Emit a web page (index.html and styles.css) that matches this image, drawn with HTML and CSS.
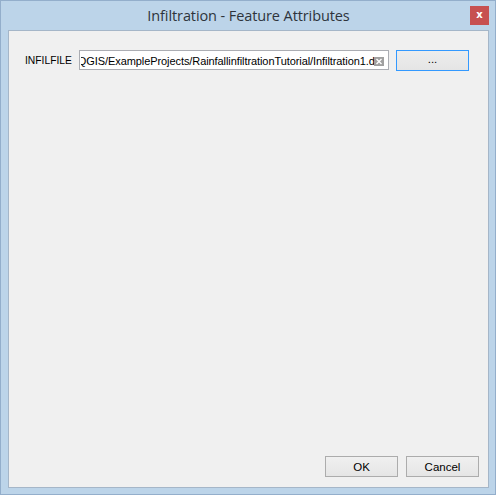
FILE: index.html
```html
<!DOCTYPE html>
<html>
<head>
<meta charset="utf-8">
<link rel="stylesheet" href="styles.css">
</head>
<body>
<div class="window">
  <div class="titlebar">
    <span></span>
    <span class="title">Infiltration - Feature Attributes</span>
    <span class="close">x</span>
  </div>
  <div class="client">
    <div class="row">
      <label class="label">INFILFILE</label>
      <div class="input">
        <div class="viewport"><span class="value">C:/QGIS/ExampleProjects/RainfallinfiltrationTutorial/Infiltration1.dat</span></div>
        <span class="clear"><svg width="10" height="9" viewBox="0 0 10 9"><path d="M2.5 2 L7.5 7 M7.5 2 L2.5 7" stroke="#fff" stroke-width="1.4"/></svg></span>
      </div>
      <button class="btn btn-default">...</button>
    </div>
    <div class="spacer"></div>
    <div class="actions">
      <button class="btn btn-action">OK</button>
      <button class="btn btn-action">Cancel</button>
    </div>
  </div>
</div>
</body>
</html>
```
FILE: styles.css
```css
html, body {
  margin: 0;
  padding: 0;
  background: #bcd4e9;
}
.window {
  width: 496px;
  height: 495px;
  box-sizing: border-box;
  border: 1px solid #93aecb;
  background: #bcd4e9;
  padding: 0 6px 6px 7px;
  display: flex;
  flex-direction: column;
  font-family: "Liberation Sans", Arial, sans-serif;
}
.titlebar {
  height: 29px;
  flex: 0 0 29px;
  display: grid;
  grid-template-columns: 1fr auto 1fr;
  align-items: start;
}
.title {
  font-family: "Open Sans", "Noto Sans", sans-serif;
  font-size: 14.5px;
  color: #2e343c;
  padding-top: 5px;
  line-height: 20px;
  letter-spacing: -0.1px;
}
.close {
  justify-self: end;
  margin-top: 5px;
  width: 19px;
  height: 19px;
  background: #c75050;
  color: #fff;
  font-family: "DejaVu Sans", sans-serif;
  font-weight: bold;
  font-size: 10px;
  line-height: 18px;
  text-align: center;
}
.client {
  flex: 1;
  background: #f0f0f0;
  border: 1px solid #a5b6c8;
  display: flex;
  flex-direction: column;
}
.row {
  display: flex;
  align-items: flex-start;
  padding: 19px 19px 0 16px;
}
.label {
  flex: 0 0 54px;
  white-space: nowrap;
  font-size: 10.3px;
  color: #000;
  line-height: 20px;
  padding-top: 1px;
}
.input {
  flex: 1;
  height: 20px;
  box-sizing: border-box;
  border: 1px solid #abadb3;
  background: #fff;
  display: flex;
  align-items: center;
  padding-left: 1px;
  margin-right: 7px;
  position: relative;
}
.viewport {
  width: 301px;
  overflow: hidden;
  white-space: nowrap;
  line-height: 18px;
}
.value {
  display: inline-block;
  font-size: 11px;
  color: #000;
  margin-left: -17px;
  letter-spacing: -0.08px;
}
.clear {
  position: absolute;
  right: 4px;
  top: 6px;
  width: 10px;
  height: 9px;
  background: #a0a0a0;
  display: flex;
}
.btn {
  font-family: "Liberation Sans", Arial, sans-serif;
  font-size: 11.5px;
  color: #000;
  height: 21px;
  padding: 0;
  box-sizing: border-box;
  background: linear-gradient(#f0f0f0, #e5e5e5);
  border: 1px solid #acacac;
  border-radius: 0;
}
.btn-default {
  width: 73px;
  border-color: #3399ff;
  background: linear-gradient(#ededed, #e5e5e5);
  padding-bottom: 3px;
}
.spacer {
  flex: 1;
}
.actions {
  display: flex;
  justify-content: flex-end;
  gap: 8px;
  padding: 0 9px 10px 0;
}
.btn-action {
  width: 73px;
}
```
